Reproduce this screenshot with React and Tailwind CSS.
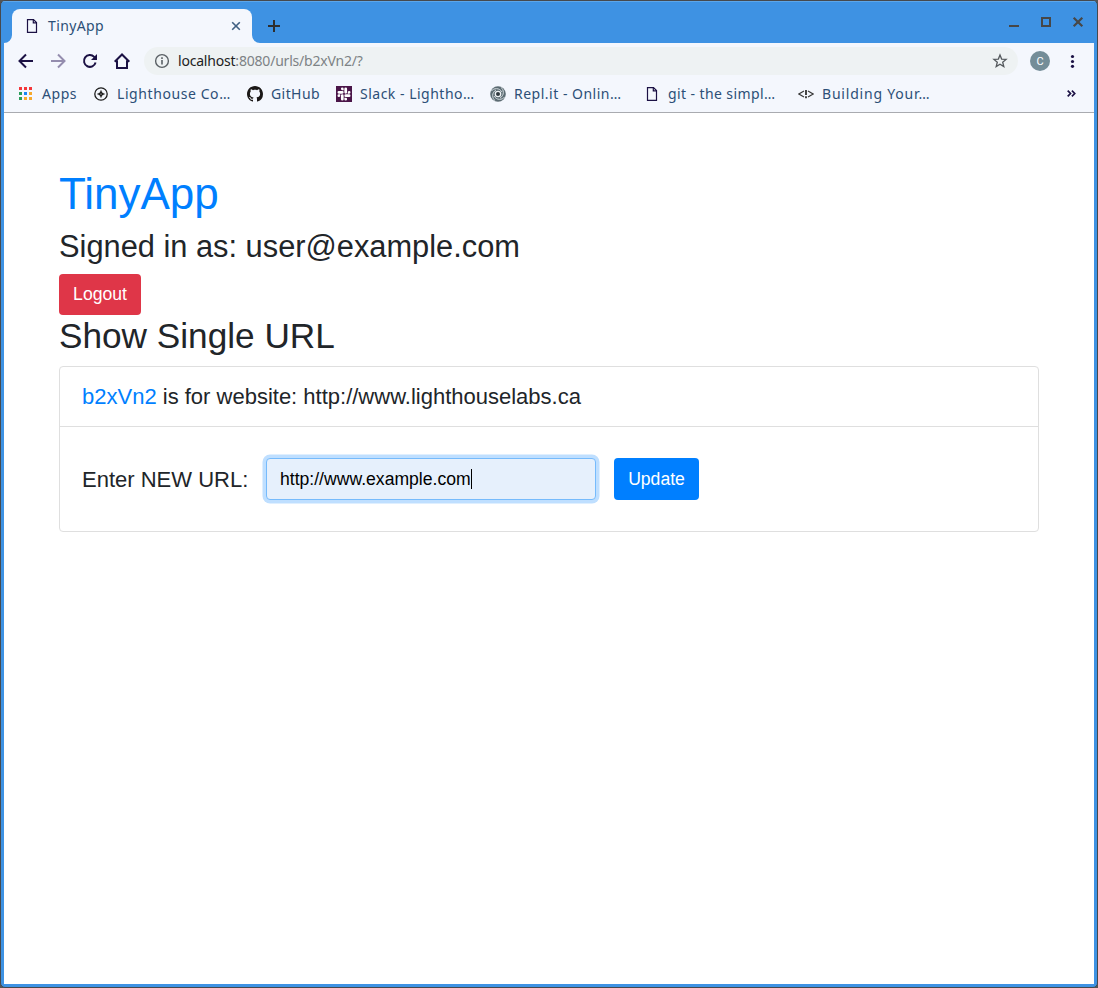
import React from "react";

const INK = "#1b1144";

function PageIcon() {
  return (
    <svg width="16" height="16" viewBox="0 0 16 16" fill="none" stroke={INK} strokeWidth="1.2" className="shrink-0">
      <path d="M3.5 1.6h6l3 3v9.8h-9z" />
      <path d="M9.3 1.6v3.3h3.2" />
    </svg>
  );
}

function AppsIcon() {
  const colors = ["#f4373a", "#f4373a", "#f4373a", "#2a9d5a", "#1a86f5", "#f6a92c", "#2a9d5a", "#f6a92c", "#f6a92c"];
  return (
    <svg width="16" height="16" viewBox="0 0 16 16" className="shrink-0" shapeRendering="crispEdges">
      {colors.map((c, i) => (
        <rect key={i} x={1 + (i % 3) * 5} y={1 + Math.floor(i / 3) * 5} width="3" height="3" fill={c} />
      ))}
    </svg>
  );
}

function CompassIcon() {
  return (
    <svg width="16" height="16" viewBox="0 0 16 16" className="shrink-0">
      <circle cx="8" cy="8" r="6.2" fill="none" stroke="#1c1c1c" strokeWidth="1.3" />
      <path d="M8 4.2 9.2 6.8 11.8 8 9.2 9.2 8 11.8 6.8 9.2 4.2 8 6.8 6.8z" fill="#1c1c1c" stroke="#1c1c1c" strokeWidth=".3" />
      <circle cx="8" cy="8" r="0.6" fill="#f4f7fd" />
    </svg>
  );
}

function GitHubIcon() {
  return (
    <svg width="16" height="16" viewBox="0 0 16 16" fill="#1b1817" className="shrink-0">
      <path d="M8 0C3.58 0 0 3.58 0 8c0 3.54 2.29 6.53 5.47 7.59.4.07.55-.17.55-.38 0-.19-.01-.82-.01-1.49-2.01.37-2.53-.49-2.69-.94-.09-.23-.48-.94-.82-1.13-.28-.15-.68-.52-.01-.53.63-.01 1.08.58 1.23.82.72 1.21 1.87.87 2.33.66.07-.52.28-.87.51-1.07-1.78-.2-3.64-.89-3.64-3.95 0-.87.31-1.59.82-2.15-.08-.2-.36-1.02.08-2.12 0 0 .67-.21 2.2.82.64-.18 1.32-.27 2-.27s1.36.09 2 .27c1.53-1.04 2.2-.82 2.2-.82.44 1.1.16 1.92.08 2.12.51.56.82 1.27.82 2.15 0 3.07-1.87 3.75-3.65 3.95.29.25.54.73.54 1.48 0 1.07-.01 1.93-.01 2.2 0 .21.15.46.55.38A8.01 8.01 0 0 0 16 8c0-4.42-3.58-8-8-8z" />
    </svg>
  );
}

function SlackIcon() {
  return (
    <svg width="16" height="16" viewBox="0 0 16 16" className="shrink-0">
      <rect width="16" height="16" fill="#4a1548" />
      <g transform="translate(1.5 1.5) scale(.542)" fill="#fff">
        <path d="M5.042 15.165a2.528 2.528 0 0 1-2.52 2.523A2.528 2.528 0 0 1 0 15.165a2.527 2.527 0 0 1 2.522-2.52h2.52v2.52zM6.313 15.165a2.527 2.527 0 0 1 2.521-2.52 2.527 2.527 0 0 1 2.521 2.52v6.313A2.528 2.528 0 0 1 8.834 24a2.528 2.528 0 0 1-2.521-2.522v-6.313zM8.834 5.042a2.528 2.528 0 0 1-2.521-2.52A2.528 2.528 0 0 1 8.834 0a2.528 2.528 0 0 1 2.521 2.522v2.52H8.834zM8.834 6.313a2.528 2.528 0 0 1 2.521 2.521 2.528 2.528 0 0 1-2.521 2.521H2.522A2.528 2.528 0 0 1 0 8.834a2.528 2.528 0 0 1 2.522-2.521h6.312zM18.956 8.834a2.528 2.528 0 0 1 2.522-2.521A2.528 2.528 0 0 1 24 8.834a2.528 2.528 0 0 1-2.522 2.521h-2.522V8.834zM17.688 8.834a2.528 2.528 0 0 1-2.523 2.521 2.527 2.527 0 0 1-2.52-2.521V2.522A2.527 2.527 0 0 1 15.165 0a2.528 2.528 0 0 1 2.523 2.522v6.312zM15.165 18.956a2.528 2.528 0 0 1 2.523 2.522A2.528 2.528 0 0 1 15.165 24a2.527 2.527 0 0 1-2.52-2.522v-2.522h2.52zM15.165 17.688a2.527 2.527 0 0 1-2.52-2.523 2.526 2.526 0 0 1 2.52-2.52h6.313A2.527 2.527 0 0 1 24 15.165a2.528 2.528 0 0 1-2.522 2.523h-6.313z" />
      </g>
    </svg>
  );
}

function ReplIcon() {
  return (
    <svg width="16" height="16" viewBox="0 0 16 16" className="shrink-0" fill="none">
      <circle cx="8" cy="8" r="7.8" fill="#5b6b72" />
      <g stroke="#dfe5e9" strokeWidth=".9">
        <path d="M1.2 5.2C3.6 1.8 9.6 1.6 12 6" />
        <path d="M10.8 1.2C14.2 3.6 14.4 9.6 10 12" />
        <path d="M14.8 10.8C12.4 14.2 6.4 14.4 4 10" />
        <path d="M5.2 14.8C1.8 12.4 1.6 6.4 6 4" />
      </g>
      <circle cx="8" cy="8" r="3.3" fill="#eef2f4" />
      <circle cx="8" cy="8" r="2" fill="#2f393e" />
    </svg>
  );
}

function CodeIcon() {
  return (
    <svg width="16" height="16" viewBox="0 0 16 16" className="shrink-0" fill="none" stroke="#3b3b3b" strokeWidth="1.2">
      <path d="M6 4.9.9 8 6 11.1M10 4.9 15.1 8 10 11.1" />
      <path d="M8 4v5M8 10.3v2" strokeWidth="1.9" />
    </svg>
  );
}

function Bookmark({ icon, width, label, spacing }) {
  return (
    <div className={`flex h-full shrink-0 items-center gap-2 ${width}`}>
      {icon}
      <span className={`pb-[2px] whitespace-nowrap ${spacing}`}>{label}</span>
    </div>
  );
}

function TitleBar() {
  return (
    <div className="flex h-[41px] shrink-0 items-start bg-[#3e92e3]">
      <svg width="8" height="8" viewBox="0 0 8 8" className="mt-[33px] shrink-0">
        <path d="M0 8A8 8 0 0 0 8 0V8z" fill="#f4f7fd" />
      </svg>
      <div className="mt-[7px] flex h-[34px] w-[240px] shrink-0 items-center rounded-t-[8px] bg-[#f4f7fd] pr-[11px] pl-[12px]">
        <PageIcon />
        <span className="ml-2 flex-1 text-[14px] leading-5 tracking-[0.38px] text-[#2c4f77]">TinyApp</span>
        <svg width="10" height="10" viewBox="0 0 10 10" stroke="#3f5f82" strokeWidth="1.6">
          <path d="M1.2 1.2 8.8 8.8M8.8 1.2 1.2 8.8" />
        </svg>
      </div>
      <svg width="8" height="8" viewBox="0 0 8 8" className="mt-[33px] shrink-0">
        <path d="M8 8A8 8 0 0 1 0 0V8z" fill="#f4f7fd" />
      </svg>
      <svg width="12" height="12" viewBox="0 0 12 12" className="mt-[18px] ml-[8px] shrink-0" stroke="#2e2e2e" strokeWidth="2">
        <path d="M6 0v12M0 6h12" />
      </svg>
      <div className="mt-[14px] mr-[10px] ml-auto flex gap-[20px]">
        <svg width="12" height="12" viewBox="0 0 12 12"><path d="M1 9h10v2H1z" fill="#474747" /></svg>
        <svg width="12" height="12" viewBox="0 0 12 12"><path d="M2 2h8v8H2z" fill="none" stroke="#474747" strokeWidth="2" /></svg>
        <svg width="12" height="12" viewBox="0 0 12 12" stroke="#474747" strokeWidth="2.2"><path d="M1.7 1.7l8.6 8.6M10.3 1.7 1.7 10.3" /></svg>
      </div>
    </div>
  );
}

function Toolbar() {
  return (
    <div className="flex h-9 shrink-0 items-center pl-[14px]">
      <div className="flex gap-4">
        <svg width="16" height="16" viewBox="0 0 16 16" fill="none" stroke={INK} strokeWidth="2">
          <path d="M15 8H2M8 1.5 1.5 8 8 14.5" />
        </svg>
        <svg width="16" height="16" viewBox="0 0 16 16" fill="none" stroke="#948dae" strokeWidth="2">
          <path d="M1 8h13M8 1.5 14.5 8 8 14.5" />
        </svg>
        <svg width="16" height="16" viewBox="0 0 16 16" fill="none" stroke={INK} strokeWidth="2">
          <path d="M13.6 9.5A5.9 5.9 0 1 1 12.2 3.9L13.3 5" />
          <path d="M15 1v6H9z" fill={INK} stroke="none" />
        </svg>
        <svg width="16" height="16" viewBox="0 0 16 16" fill="none" stroke={INK} strokeWidth="2">
          <path d="M.7 8.8 8 1.5l7.3 7.3M3 7.5V15h10V7.5" />
        </svg>
      </div>
      <div className="ml-[14px] flex h-7 w-[874px] items-center rounded-full bg-[#eef2f3] px-[10px]">
        <svg width="16" height="16" viewBox="0 0 16 16" fill="none" stroke="#5a6065" strokeWidth="1.4">
          <circle cx="8" cy="8" r="6.4" />
          <path d="M8 7v4.6M8 4.3V6" strokeWidth="1.6" />
        </svg>
        <span className="ml-2 flex-1 text-[14px] leading-5 tracking-[-0.2px] whitespace-nowrap text-[#7d8285]">
          <span className="text-[#222]">localhost</span>:8080/urls/b2xVn2/?
        </span>
        <svg width="16" height="16" viewBox="0 0 16 16" fill="none" stroke="#54595d" strokeWidth="1.3">
          <path d="m8 2 1.65 4.1 4.45.3-3.4 2.85L11.8 13.6 8 11.2l-3.8 2.4 1.1-4.35L1.9 6.4l4.45-.3z" />
        </svg>
      </div>
      <div className="ml-3 flex size-5 items-center justify-center rounded-full bg-[#748d98] font-['Roboto',sans-serif] text-[11px] leading-none text-white">
        C
      </div>
      <svg width="5" height="14" viewBox="0 0 5 14" className="ml-[20px]" fill={INK}>
        <circle cx="2.5" cy="2.5" r="1.6" />
        <circle cx="2.5" cy="7.5" r="1.6" />
        <circle cx="2.5" cy="12.3" r="1.6" />
      </svg>
    </div>
  );
}

function BookmarksBar() {
  return (
    <div className="flex h-[30px] shrink-0 items-center pl-[14px] text-[14px] text-[#2c4f77]">
      <Bookmark icon={<AppsIcon />} label="Apps" width="w-[75px]" spacing="tracking-[0.55px]" />
      <Bookmark icon={<CompassIcon />} label="Lighthouse Co…" width="w-[154px]" spacing="tracking-[0.58px]" />
      <Bookmark icon={<GitHubIcon />} label="GitHub" width="w-[89px]" spacing="tracking-[0.42px]" />
      <Bookmark icon={<SlackIcon />} label="Slack - Lightho…" width="w-[154px]" spacing="tracking-[0.5px]" />
      <Bookmark icon={<ReplIcon />} label="Repl.it - Onlin…" width="w-[154px]" spacing="tracking-[0.5px]" />
      <Bookmark icon={<PageIcon />} label="git - the simpl…" width="w-[154px]" spacing="tracking-[0.4px]" />
      <Bookmark icon={<CodeIcon />} label="Building Your…" width="w-[150px]" spacing="tracking-[0.8px]" />
      <svg width="9" height="7" viewBox="0 0 9 7" className="mr-[18px] mb-px ml-auto" fill="none" stroke={INK} strokeWidth="1.7">
        <path d="M.7.7 3.5 3.5.7 6.3M4.9.7l2.8 2.8-2.8 2.8" />
      </svg>
    </div>
  );
}

function Page() {
  return (
    <main className="flex flex-1 flex-col items-start bg-white px-[55px] pt-[54px] font-['Liberation_Sans',Arial,sans-serif] text-[#212529]">
      <h1 className="text-[44px] leading-[53px] text-[#007fff]">TinyApp</h1>
      <h3 className="mt-2 text-[30.8px] leading-[37px]">Signed in as: user@example.com</h3>
      <button className="mt-[9px] h-[41px] w-[82px] rounded-[4px] bg-[#df3648] pb-[2px] text-[17.6px] leading-[26px] text-white">Logout</button>
      <h2 className="text-[35.2px] leading-[42px]">Show Single URL</h2>
      <div className="mt-[9px] w-full rounded-[4px] border border-[#dfdfdf] text-[22px]">
        <div className="flex h-[60px] items-center border-b border-[#dfdfdf] pl-[22px]">
          <p><span className="text-[#007fff]">b2xVn2</span> is for website: http://www.lighthouselabs.ca</p>
        </div>
        <form className="flex h-[104px] items-center pl-[22px]">
          <label className="w-[184px]">Enter NEW URL:</label>
          <div className="flex h-[42px] w-[330px] items-center rounded-[4px] border border-[#76bbfc] bg-[#e6f0fc] pl-[13px] text-[17.6px] text-black shadow-[0_0_0_3.5px_#bfdfff]">
            http://www.example.com
            <span className="h-5 w-px bg-black" />
          </div>
          <button type="button" className="ml-[18px] h-[42px] w-[85px] rounded-[4px] bg-[#007fff] text-[17.6px] text-white">Update</button>
        </form>
      </div>
    </main>
  );
}

export default function App() {
  return (
    <div className="h-[988px] w-[1098px] bg-[#555]">
      <div className="flex h-full flex-col overflow-hidden rounded-[5px] border border-[#46494d] bg-[#3e92e3] px-[3px] pb-[3px] font-['Noto_Sans',sans-serif]">
        <div className="-mx-[3px] h-px shrink-0 bg-[#5ca6ea]" />
        <TitleBar />
        <div className="flex h-[70px] shrink-0 flex-col border-b border-[#a9abb0] bg-[#f4f7fd]">
          <Toolbar />
          <BookmarksBar />
        </div>
        <Page />
      </div>
    </div>
  );
}
